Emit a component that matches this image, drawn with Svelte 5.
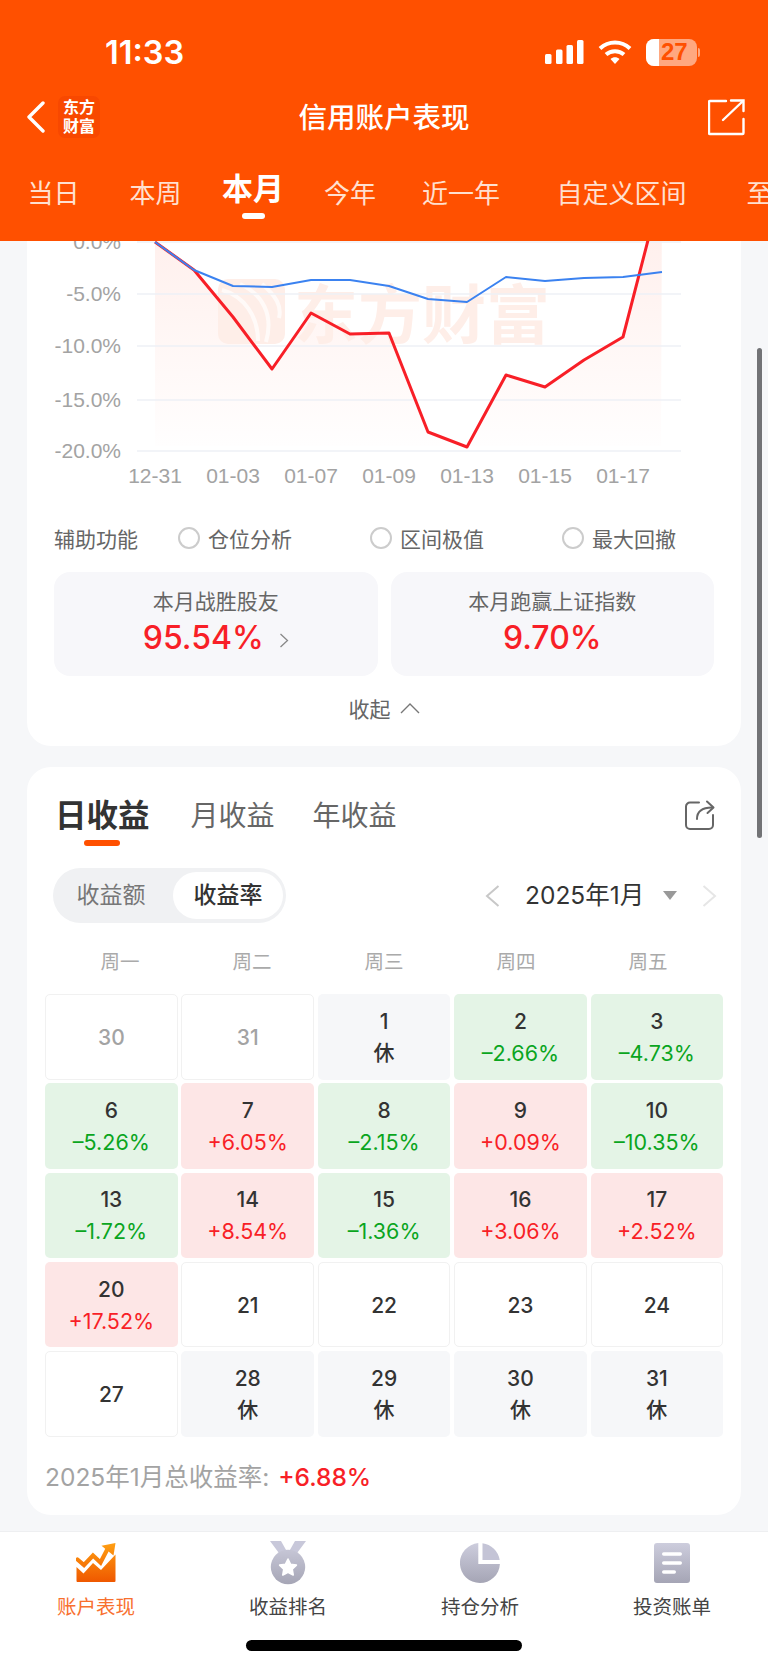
<script>
  const xs = Array.from({ length: 14 }, (_, i) => 155 + i * 39);
  const redY = [242, 270, 317, 369, 313, 334, 333, 432, 447, 375, 387, 360, 337, 186];
  const blueY = [242, 270, 286, 287, 280, 280, 286, 299, 302, 277, 281, 278, 277, 272];
  const line = (ys) => ys.map((y, i) => `${xs[i]},${y}`).join(' ');
  const areaPoints = `${line(redY)} 661,446 155,446`;
  const grid = [242, 294, 346, 400, 451];
  const yLabels = ['0.0%', '-5.0%', '-10.0%', '-15.0%', '-20.0%'];
  const xLabels = ['12-31', '01-03', '01-07', '01-09', '01-13', '01-15', '01-17'];
  const topTabs = ['当日', '本周', '本月', '今年', '近一年', '自定义区间', '至今'];
  const weekdays = ['周一', '周二', '周三', '周四', '周五'];
  const cells = [
    { d: '30', k: 'off' }, { d: '31', k: 'off' }, { d: '1', k: 'rest', v: '休' }, { d: '2', k: 'down', v: '–2.66%' }, { d: '3', k: 'down', v: '–4.73%' },
    { d: '6', k: 'down', v: '–5.26%' }, { d: '7', k: 'up', v: '+6.05%' }, { d: '8', k: 'down', v: '–2.15%' }, { d: '9', k: 'up', v: '+0.09%' }, { d: '10', k: 'down', v: '–10.35%' },
    { d: '13', k: 'down', v: '–1.72%' }, { d: '14', k: 'up', v: '+8.54%' }, { d: '15', k: 'down', v: '–1.36%' }, { d: '16', k: 'up', v: '+3.06%' }, { d: '17', k: 'up', v: '+2.52%' },
    { d: '20', k: 'up', v: '+17.52%' }, { d: '21', k: 'open' }, { d: '22', k: 'open' }, { d: '23', k: 'open' }, { d: '24', k: 'open' },
    { d: '27', k: 'open' }, { d: '28', k: 'rest', v: '休' }, { d: '29', k: 'rest', v: '休' }, { d: '30', k: 'rest', v: '休' }, { d: '31', k: 'rest', v: '休' }
  ];
</script>

<div class="page">
  <header class="header">
    <div class="status">
      <span class="time">11:33</span>
      <div class="status-icons">
        <svg width="39" height="24" viewBox="0 0 39 24"><g fill="#fff"><rect x="0" y="14" width="6.5" height="10" rx="1.5"/><rect x="11" y="9.5" width="6.5" height="14.5" rx="1.5"/><rect x="21.5" y="5" width="6.5" height="19" rx="1.5"/><rect x="32" y="0" width="6.5" height="24" rx="1.5"/></g></svg>
        <svg class="wifi" width="34" height="24" viewBox="0 0 34 24"><g fill="none" stroke="#fff" stroke-width="4"><path d="M2 8.5 C 10.5 0.5, 23.5 0.5, 32 8.5"/><path d="M8 14.5 C 13 10, 21 10, 26 14.5"/></g><path d="M12.5 19 C 15 16.8, 19 16.8, 21.5 19 L 17 24 Z" fill="#fff"/></svg>
        <div class="battery">
          <div class="batt-body"><span class="batt-fill"></span><span class="batt-num">27</span></div>
          <span class="batt-nub"></span>
        </div>
      </div>
    </div>
    <div class="nav">
      <div class="nav-left">
        <svg width="20" height="32" viewBox="0 0 20 32"><path d="M17 2 L3 16 L17 30" fill="none" stroke="#fff" stroke-width="3.4" stroke-linecap="round" stroke-linejoin="round"/></svg>
        <div class="brand"><span>东方</span><span>财富</span></div>
      </div>
      <div class="title">信用账户表现</div>
      <div class="nav-right">
        <svg width="37" height="37" viewBox="0 0 37 37"><g fill="none" stroke="#fff" stroke-width="2.4" stroke-linecap="round"><path d="M18 2 H2 a1 1 0 0 0 -1 1 V34 a1 1 0 0 0 1 1 H34.5 a1 1 0 0 0 1 -1 V20"/><path d="M15 21 L35 2"/><path d="M23 1.5 H35.5 V12"/></g></svg>
      </div>
    </div>
    <div class="tabs">
      {#each topTabs as t, i}
        <span class="tab" class:active={i === 2}>{t}</span>
      {/each}
    </div>
  </header>

  <main class="scroll">
    <section class="card card-chart">
      <svg class="chart" width="714" height="275" viewBox="27 241 714 275">
        <defs>
          <linearGradient id="area" gradientUnits="userSpaceOnUse" x1="0" y1="241" x2="0" y2="446">
            <stop offset="0" stop-color="#fff0ed"/>
            <stop offset="1" stop-color="#fffefe"/>
          </linearGradient>
        </defs>
        <polygon points={areaPoints} fill="url(#area)"/>
        <rect x="218" y="279" width="67" height="65" rx="10" fill="#feeee8"/>
        <path d="M222 290 C 244 296, 258 316, 258 341 M240 284 C 262 294, 274 314, 266 342 M262 284 C 276 296, 282 306, 279 318" fill="none" stroke="#fffaf8" stroke-width="4"/>
        <text class="wm" x="294" y="338">东方财富</text>
        {#each grid as y}
          <line x1="137" x2="681" y1={y} y2={y} stroke="#eef0f6" stroke-width="1.5"/>
        {/each}
        {#each yLabels as l, i}
          <text class="axis" x="121" y={grid[i] + 7} text-anchor="end">{l}</text>
        {/each}
        {#each xLabels as l, i}
          <text class="axis" x={155 + i * 78} y="483" text-anchor="middle">{l}</text>
        {/each}
        <polyline points={line(redY)} fill="none" stroke="#f81f27" stroke-width="3" stroke-linejoin="round"/>
        <polyline points={line(blueY)} fill="none" stroke="#3b82f0" stroke-width="2" stroke-linejoin="round"/>
      </svg>

      <div class="aux">
        <span class="aux-label">辅助功能</span>
        <div class="aux-opts">
          {#each ['仓位分析', '区间极值', '最大回撤'] as o}
            <span class="opt"><i class="radio"></i>{o}</span>
          {/each}
        </div>
      </div>

      <div class="stats">
        <div class="stat">
          <div class="stat-label">本月战胜股友</div>
          <div class="stat-value">95.54%<svg class="stat-arrow" width="10" height="15" viewBox="0 0 10 15"><path d="M1.5 1 L8.5 7.5 L1.5 14" fill="none" stroke="#888" stroke-width="1.3"/></svg></div>
        </div>
        <div class="stat">
          <div class="stat-label">本月跑赢上证指数</div>
          <div class="stat-value">9.70%</div>
        </div>
      </div>

      <div class="collapse">
        <span>收起</span>
        <svg width="20" height="11" viewBox="0 0 20 11"><path d="M1 10 L10 1 L19 10" fill="none" stroke="#777" stroke-width="1.4"/></svg>
      </div>
    </section>

    <section class="card card-cal">
      <div class="cal-tabs">
        <span class="cal-tab on">日收益</span>
        <span class="cal-tab">月收益</span>
        <span class="cal-tab">年收益</span>
        <svg class="cal-share" width="30" height="30" viewBox="0 0 30 30"><g fill="none" stroke="#666" stroke-width="2" stroke-linecap="round" stroke-linejoin="round"><path d="M14 2.5 H5 a4 4 0 0 0 -4 4 V25 a4 4 0 0 0 4 4 H24 a4 4 0 0 0 4 -4 V15"/><path d="M12 19 C 12 11, 17 7.5, 27 7.5"/><path d="M22 1.5 L28.5 7.5 L22.5 13"/></g></svg>
      </div>

      <div class="cal-controls">
        <div class="toggle">
          <span class="seg">收益额</span>
          <span class="seg on">收益率</span>
        </div>
        <div class="month">
          <svg width="15" height="22" viewBox="0 0 15 22"><path d="M13.5 1 L2 11 L13.5 21" fill="none" stroke="#c8c8c8" stroke-width="2"/></svg>
          <span class="month-text">2025年1月</span>
          <span class="tri"></span>
          <svg width="15" height="22" viewBox="0 0 15 22"><path d="M1.5 1 L13 11 L1.5 21" fill="none" stroke="#e6e6e6" stroke-width="2"/></svg>
        </div>
      </div>

      <div class="weekdays">
        {#each weekdays as w}<span>{w}</span>{/each}
      </div>

      <div class="cal-grid">
        {#each cells as c}
          <div class="cell {c.k}">
            <span class="day">{c.d}</span>
            {#if c.v}<span class="val">{c.v}</span>{/if}
          </div>
        {/each}
      </div>

      <div class="total">2025年1月总收益率: <b>+6.88%</b></div>
    </section>
    <span class="scrollbar"></span>
  </main>

  <footer class="footer">
    <div class="foot-items">
      <div class="foot-item active">
        <svg width="40" height="44" viewBox="0 -2 40 44">
          <defs>
            <linearGradient id="gOrange" gradientUnits="userSpaceOnUse" x1="0" y1="0" x2="0" y2="39"><stop offset="0" stop-color="#ff9f12"/><stop offset="1" stop-color="#ef5800"/></linearGradient>
          </defs>
          <path d="M0.5 24 L7.5 30.5 L17 20 L25 27 L39.5 11.5 V38 a1 1 0 0 1 -1 1 H1.5 a1 1 0 0 1 -1 -1 Z" fill="url(#gOrange)"/>
          <path d="M1.5 16.5 L8 22 L17 12.5 L24.5 19.5 L31.5 6" fill="none" stroke="url(#gOrange)" stroke-width="4.2" stroke-linecap="round"/>
          <path d="M25.5 2.8 L39.5 0 L37.5 12.5 Z" fill="url(#gOrange)"/>
        </svg>
        <span>账户表现</span>
      </div>
      <div class="foot-item">
        <svg width="36" height="44" viewBox="0 0 36 44">
          <defs>
            <linearGradient id="gGray" gradientUnits="userSpaceOnUse" x1="0" y1="8" x2="0" y2="44"><stop offset="0" stop-color="#c6c6d6"/><stop offset="1" stop-color="#a5a5b5"/></linearGradient>
          </defs>
          <path d="M0 0 H11 L17.2 11 L10 13.5 Z M36 0 H25 L18.8 11 L26 13.5 Z" fill="#c8c8da"/>
          <circle cx="18" cy="26" r="17.2" fill="url(#gGray)"/>
          <path d="M18 18 L20.6 23.3 L26.4 24.1 L22.2 28.2 L23.2 34 L18 31.2 L12.8 34 L13.8 28.2 L9.6 24.1 L15.4 23.3 Z" fill="#fff" stroke="#fff" stroke-width="1.6" stroke-linejoin="round"/>
        </svg>
        <span>收益排名</span>
      </div>
      <div class="foot-item">
        <svg width="40" height="44" viewBox="0 -2 40 44">
          <defs>
            <linearGradient id="gGray2" gradientUnits="userSpaceOnUse" x1="0" y1="0" x2="0" y2="40"><stop offset="0" stop-color="#cdcddd"/><stop offset="1" stop-color="#a5a5b5"/></linearGradient>
          </defs>
          <path d="M18.3 0.1 V21 H39.9 A20 20 0 1 1 18.3 0.1 Z" fill="url(#gGray2)"/>
          <path d="M22.5 0.3 A20 20 0 0 1 39.7 17 H22.5 Z" fill="#c4c4d6"/>
        </svg>
        <span>持仓分析</span>
      </div>
      <div class="foot-item">
        <svg width="36" height="44" viewBox="0 -2 36 44">
          <defs>
            <linearGradient id="gGray3" gradientUnits="userSpaceOnUse" x1="0" y1="0" x2="0" y2="40"><stop offset="0" stop-color="#cdcddd"/><stop offset="1" stop-color="#a5a5b5"/></linearGradient>
          </defs>
          <rect x="0" y="0" width="36" height="40" rx="3" fill="url(#gGray3)"/>
          <g fill="#fff"><rect x="8" y="9.3" width="20" height="3.4" rx="1.7"/><rect x="8" y="18.3" width="20" height="3.4" rx="1.7"/><rect x="8" y="27.3" width="14" height="3.4" rx="1.7"/></g>
        </svg>
        <span>投资账单</span>
      </div>
    </div>
    <div class="home"></div>
  </footer>
</div>

<style>
  :global(body) { margin: 0; background: #f6f7f9; }
  .page {
    width: 768px; height: 1665px; display: flex; flex-direction: column; overflow: hidden;
    background: #f6f7f9; color: #333;
    font-family: Inter, "Noto Sans CJK SC", sans-serif;
  }
  .header { height: 241px; background: #ff5000; color: #fff; flex: none; }
  .status { height: 92px; box-sizing: border-box; padding: 12px 68px 0 105px; display: flex; align-items: center; justify-content: space-between; }
  .time { font-size: 32.5px; font-weight: 600; }
  .status-icons { display: flex; align-items: center; gap: 14px; }
  .battery { display: flex; align-items: center; gap: 1px; }
  .batt-body { position: relative; width: 51px; height: 27px; border-radius: 8px; background: rgba(255,255,255,.5); overflow: hidden; display: flex; align-items: center; padding-left: 15px; box-sizing: border-box; }
  .batt-fill { position: absolute; left: 0; top: 0; bottom: 0; width: 13px; background: #fff; }
  .batt-num { position: relative; font-size: 24px; font-weight: 700; color: #ff5000; font-family: "Liberation Sans", sans-serif; }
  .batt-nub { width: 2px; height: 9px; background: rgba(255,255,255,.5); border-radius: 0 2px 2px 0; }
  .nav { height: 50px; padding: 0 23px; display: grid; grid-template-columns: 1fr auto 1fr; align-items: center; }
  .nav-left { display: flex; align-items: center; gap: 12px; padding-left: 3px; }
  .nav-right { justify-self: end; display: flex; }
  .brand { width: 42px; height: 42px; border-radius: 7px; background: #f84800; display: flex; flex-direction: column; align-items: center; justify-content: center; font-size: 16px; font-weight: 700; line-height: 19px; }
  .title { font-size: 28.5px; font-weight: 500; padding-bottom: 4px; }
  .tabs { height: 99px; box-sizing: border-box; padding: 5px 0 0 27.5px; display: flex; align-items: center; white-space: nowrap; overflow: hidden; font-size: 26px; color: #ffe0d0; }
  .tab { position: relative; line-height: 36px; flex: none; }
  .tab:nth-child(2) { margin-left: 50px; }
  .tab:nth-child(3) { margin-left: 40.5px; font-size: 31px; font-weight: 700; color: #fff; margin-top: -11px; }
  .tab:nth-child(4) { margin-left: 40px; }
  .tab:nth-child(5) { margin-left: 46px; }
  .tab:nth-child(6) { margin-left: 56.5px; }
  .tab:nth-child(7) { margin-left: 60px; }
  .tab.active::after { content: ""; position: absolute; left: 50%; bottom: -12px; width: 23px; height: 6px; margin-left: -11.5px; border-radius: 3px; background: #fff; }

  .scroll { flex: 1; position: relative; overflow: hidden; padding: 0 27px; }
  .scrollbar { position: absolute; left: 757px; top: 107px; width: 5px; height: 490px; border-radius: 3px; background: #727376; }
  .card { background: #fff; }
  .card-chart { height: 505px; border-radius: 0 0 24px 24px; }
  .chart { display: block; }
  .axis { font-family: "Liberation Sans", sans-serif; font-size: 21px; fill: #a3a3a3; }
  .wm { font-family: "Noto Sans CJK SC", sans-serif; font-size: 64px; font-weight: 700; fill: #feeee8; }

  .aux { margin-top: 7px; height: 30px; padding-left: 27px; display: flex; align-items: center; font-size: 21px; color: #666; }
  .aux-label { width: 124px; flex: none; white-space: nowrap; }
  .aux-opts { display: flex; }
  .opt { width: 192px; display: flex; align-items: center; gap: 8px; white-space: nowrap; }
  .radio { width: 22px; height: 22px; box-sizing: border-box; border: 2px solid #ccc; border-radius: 50%; flex: none; }

  .stats { margin: 19px 27px 0; height: 104px; display: flex; gap: 13px; }
  .stat { flex: 1; background: #f7f7fa; border-radius: 16px; text-align: center; padding-top: 14px; box-sizing: border-box; }
  .stat-label { font-size: 21px; line-height: 32px; color: #666; }
  .stat-value { display: inline-flex; align-items: center; gap: 15px; font-size: 32px; font-weight: 500; line-height: 40px; color: #f81f27; }
  .stat-arrow { margin-top: 5px; }
  .collapse { margin-top: 17px; height: 30px; display: flex; align-items: center; justify-content: center; gap: 9px; font-size: 21px; color: #666; }

  .card-cal { margin-top: 21px; height: 748px; border-radius: 24px; padding: 29px 17px 0 18px; box-sizing: border-box; }
  .cal-tabs { height: 40px; padding-left: 10px; display: flex; align-items: center; gap: 38px; font-size: 28px; line-height: 40px; color: #666; position: relative; }
  .cal-tab { position: relative; white-space: nowrap; }
  .cal-tab.on { font-size: 31.5px; font-weight: 700; color: #333; margin-right: 3px; }
  .cal-tab.on::after { content: ""; position: absolute; left: 29px; top: 44px; width: 36px; height: 6px; border-radius: 3px; background: #ff5000; }
  .cal-share { position: absolute; right: 9px; top: 4px; }
  .cal-controls { margin-top: 32px; height: 55px; display: flex; align-items: center; justify-content: space-between; padding: 0 7px 0 8px; }
  .toggle { width: 233px; height: 55px; box-sizing: border-box; padding: 4px 3px 4px 4px; border-radius: 28px; background: #f0f1f3; display: flex; align-items: center; font-size: 23px; }
  .seg { flex: none; width: 108px; text-align: center; color: #777; white-space: nowrap; height: 47px; line-height: 47px; border-radius: 24px; }
  .seg.on { margin-left: auto; width: 110px; background: #fff; color: #333; font-weight: 500; }
  .month { display: flex; align-items: center; color: #333; }
  .month-text { margin-left: 25px; font-size: 24.5px; white-space: nowrap; width: 120px; padding-bottom: 4px; }
  .tri { margin-left: 18px; width: 0; height: 0; border-left: 7px solid transparent; border-right: 7px solid transparent; border-top: 9px solid #999; }
  .month svg:last-child { margin-left: 25px; }
  .weekdays { margin-top: 25px; height: 28px; padding-left: 9px; display: grid; grid-template-columns: repeat(5, 132px); text-align: center; font-size: 19.5px; line-height: 28px; color: #aaa; }
  .cal-grid { margin-top: 18px; display: grid; grid-template-columns: repeat(5, 132.7px); grid-auto-rows: 85.6px; gap: 3.7px; }
  .cell { box-sizing: border-box; border-radius: 5px; display: flex; flex-direction: column; align-items: center; justify-content: center; font-size: 21px; line-height: 32px; color: #333; font-weight: 500; white-space: nowrap; }
  .val { font-size: 21.5px; line-height: 30px; font-weight: 400; }
  .off { border: 1px solid #f1f1f1; color: #a3a3a3; padding-top: 2px; }
  .open { border: 1px solid #f1f1f1; padding-top: 2px; }
  .rest { background: #f6f7f9; }
  .rest .val { color: #333; font-weight: 500; font-size: 21px; }
  .down { background: #e4f4e6; }
  .down .val { color: #0aa51e; }
  .up { background: #fde6e6; }
  .up .val { color: #f81f27; }
  .total { margin-top: 26px; height: 28px; line-height: 28px; font-size: 24.5px; color: #a3a3a3; white-space: nowrap; }
  .total b { font-weight: 500; color: #f81f27; margin-left: 2px; }

  .footer { height: 134px; flex: none; background: #fff; border-top: 1px solid #eeeff1; box-sizing: border-box; position: relative; }
  .foot-items { display: grid; grid-template-columns: repeat(4, 192px); padding-top: 9px; }
  .foot-item { display: flex; flex-direction: column; align-items: center; font-size: 19.5px; color: #444; height: 80px; }
  .foot-item span { margin-top: 8px; line-height: 28px; }
  .foot-item.active span { color: #f8702e; }
  .home { position: absolute; left: 246px; top: 108px; width: 276px; height: 11px; border-radius: 6px; background: #000; }
</style>
